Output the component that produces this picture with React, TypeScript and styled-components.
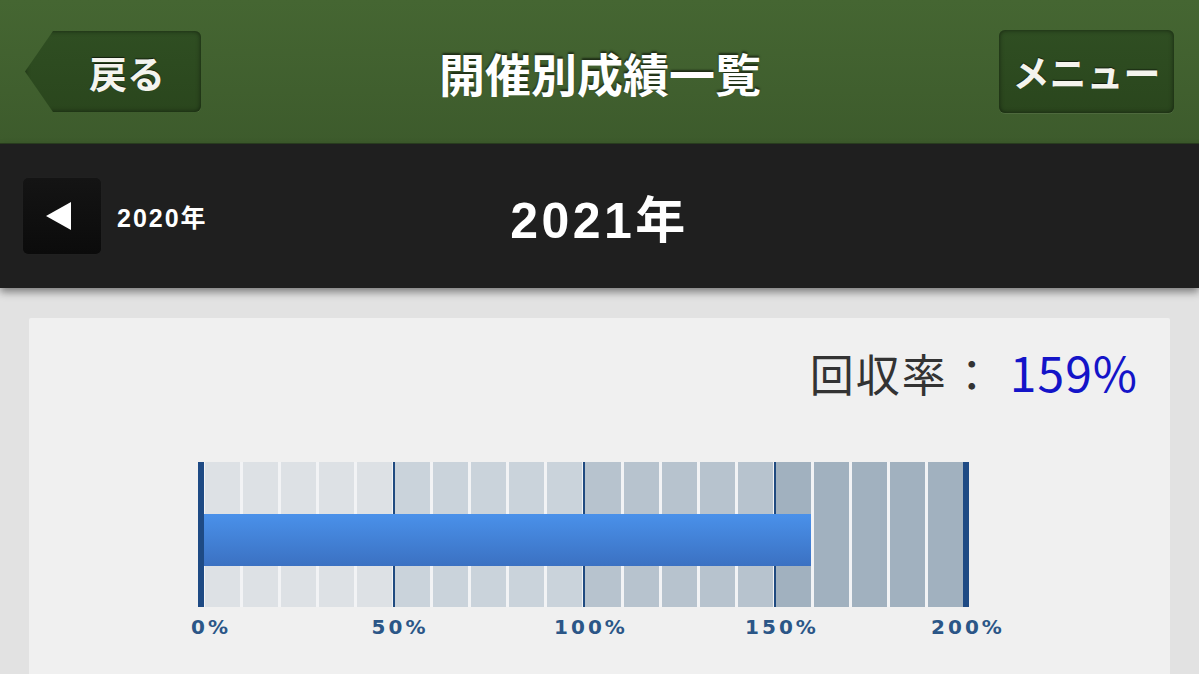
import React from 'react';
import styled, { createGlobalStyle } from 'styled-components';

const GlobalStyle = createGlobalStyle`
  html, body {
    margin: 0;
    padding: 0;
    background: #e2e2e2;
    overflow: hidden;
  }
  body {
    font-family: "Noto Sans CJK JP", "Noto Sans", sans-serif;
  }
`;

const RATE = 159;
const MAX = 200;

const zoneColors = ['#dde1e5', '#cad3db', '#b7c3ce', '#a1b1bf'];

const ticks = [
  { label: '0%', x: 13 },
  { label: '50%', x: 202 },
  { label: '100%', x: 393 },
  { label: '150%', x: 584 },
  { label: '200%', x: 770 },
];

const App: React.FC = () => {
  const cells = Array.from({ length: 20 }, (_, i) => i);
  const barWidth = `calc(${(RATE / MAX) * 100}% + 4px)`;

  return (
    <Page>
      <GlobalStyle />
      <Header>
        <BackButton>戻る</BackButton>
        <Title>開催別成績一覧</Title>
        <MenuButton>メニュー</MenuButton>
      </Header>

      <YearBar>
        <PrevGroup>
          <PrevButton>
            <svg width="26" height="28" viewBox="0 0 26 28">
              <polygon points="0,14 25,0 25,28" fill="#fff" />
            </svg>
          </PrevButton>
          <PrevLabel>2020年</PrevLabel>
        </PrevGroup>
        <CurrentYear>2021年</CurrentYear>
        <div />
      </YearBar>

      <Card>
        <RateRow>
          回収率<Colon>：</Colon>
          <RateValue>{RATE}%</RateValue>
        </RateRow>

        <ChartWrap>
          <Chart>
            <Cap />
            <Grid>
              {cells.map((i) => (
                <Cell key={i} $zone={Math.floor(i / 5)} $major={i > 0 && i % 5 === 0} />
              ))}
              <Bar style={{ width: barWidth }} />
            </Grid>
            <Cap />
          </Chart>
          <Axis>
            {ticks.map((t) => (
              <Tick key={t.label} style={{ left: t.x }}>
                {t.label}
              </Tick>
            ))}
          </Axis>
        </ChartWrap>
      </Card>
    </Page>
  );
};

export default App;

const Page = styled.div`
  width: 1199px;
  height: 674px;
  overflow: hidden;
  background: #e2e2e2;
`;

const Header = styled.header`
  height: 144px;
  box-sizing: border-box;
  padding: 0 25px;
  display: flex;
  align-items: center;
  justify-content: space-between;
  background: linear-gradient(#456632, #3d5b2c);
  border-bottom: 1px solid #2b3f20;
`;

const GreenButton = styled.div`
  height: 81px;
  box-sizing: border-box;
  display: flex;
  align-items: center;
  justify-content: center;
  color: #f4f4ee;
  font-size: 37px;
  font-weight: 700;
  text-shadow: 0 -1px 1px rgba(0, 0, 0, 0.6);
  background: linear-gradient(#2f4e22, #2a461d);
  border-radius: 6px;
  box-shadow: inset 0 0 5px rgba(0, 0, 0, 0.55), 0 1px 0 rgba(255, 255, 255, 0.08);
  cursor: pointer;
`;

const BackButton = styled(GreenButton)`
  width: 176px;
  padding-left: 28px;
  font-size: 38px;
  clip-path: polygon(28px 0, 100% 0, 100% 100%, 28px 100%, 0 50%);
`;

const MenuButton = styled(GreenButton)`
  width: 175px;
  height: 83px;
`;

const Title = styled.h1`
  margin: 0;
  color: #fff;
  font-size: 46px;
  font-weight: 700;
  text-shadow: 0 -2px 2px rgba(0, 0, 0, 0.55);
`;

const YearBar = styled.div`
  height: 144px;
  box-sizing: border-box;
  padding: 0 23px;
  display: grid;
  grid-template-columns: 1fr auto 1fr;
  align-items: center;
  background: #1f1f1f;
  box-shadow: 0 4px 8px rgba(0, 0, 0, 0.45);
  position: relative;
  z-index: 1;
`;

const PrevGroup = styled.div`
  display: flex;
  align-items: center;
  gap: 16px;
`;

const PrevButton = styled.div`
  width: 78px;
  height: 76px;
  border-radius: 5px;
  background: linear-gradient(#141414, #0b0b0b);
  box-shadow: 0 0 1px rgba(255, 255, 255, 0.08);
  display: flex;
  align-items: center;
  justify-content: center;
  padding-right: 6px;
  box-sizing: border-box;
`;

const PrevLabel = styled.span`
  color: #fff;
  font-family: "Liberation Sans", "Noto Sans CJK JP", sans-serif;
  font-size: 25px;
  font-weight: 700;
  letter-spacing: 2px;
`;

const CurrentYear = styled.div`
  color: #fff;
  font-family: "Liberation Sans", "Noto Sans CJK JP", sans-serif;
  font-size: 50px;
  font-weight: 700;
  letter-spacing: 3.5px;
`;

const Card = styled.section`
  margin: 30px 29px 0;
  padding: 27px 32px 80px 0;
  background: #f0f0f0;
  border-radius: 2px;
`;

const RateRow = styled.div`
  text-align: right;
  font-size: 44px;
  font-weight: 400;
  line-height: 53px;
  color: #333;
  letter-spacing: 2px;
`;

const Colon = styled.span`
  margin-left: 2px;
`;

const RateValue = styled.span`
  color: #1414c8;
  margin-left: 14px;
  font-size: 48px;
  letter-spacing: 1px;
`;

const ChartWrap = styled.div`
  margin: 62px 0 0 169px;
  width: 771px;
`;

const Chart = styled.div`
  height: 145px;
  display: flex;
`;

const Cap = styled.div`
  width: 6px;
  background: #1e4a84;
`;

const Grid = styled.div`
  flex: 1;
  position: relative;
  display: grid;
  grid-template-columns: repeat(20, 1fr);
  column-gap: 3px;
  padding-left: 1px;
  background: #f2f3f5;
`;

const Cell = styled.div<{ $zone: number; $major: boolean }>`
  background: ${(p) => zoneColors[p.$zone]};
  box-shadow: ${(p) => (p.$major ? '-2px 0 0 #1f4a80' : 'none')};
`;

const Bar = styled.div`
  position: absolute;
  left: 0;
  top: 52px;
  height: 52px;
  background: linear-gradient(#4a91ea, #3b71c2);
`;

const Axis = styled.div`
  position: relative;
  height: 24px;
  margin-top: 8px;
`;

const Tick = styled.span`
  position: absolute;
  top: 0;
  transform: translateX(-50%);
  font-family: "DejaVu Sans", Verdana, sans-serif;
  font-size: 20px;
  line-height: 24px;
  font-weight: 700;
  letter-spacing: 3px;
  color: #2b5687;
  white-space: nowrap;
`;
